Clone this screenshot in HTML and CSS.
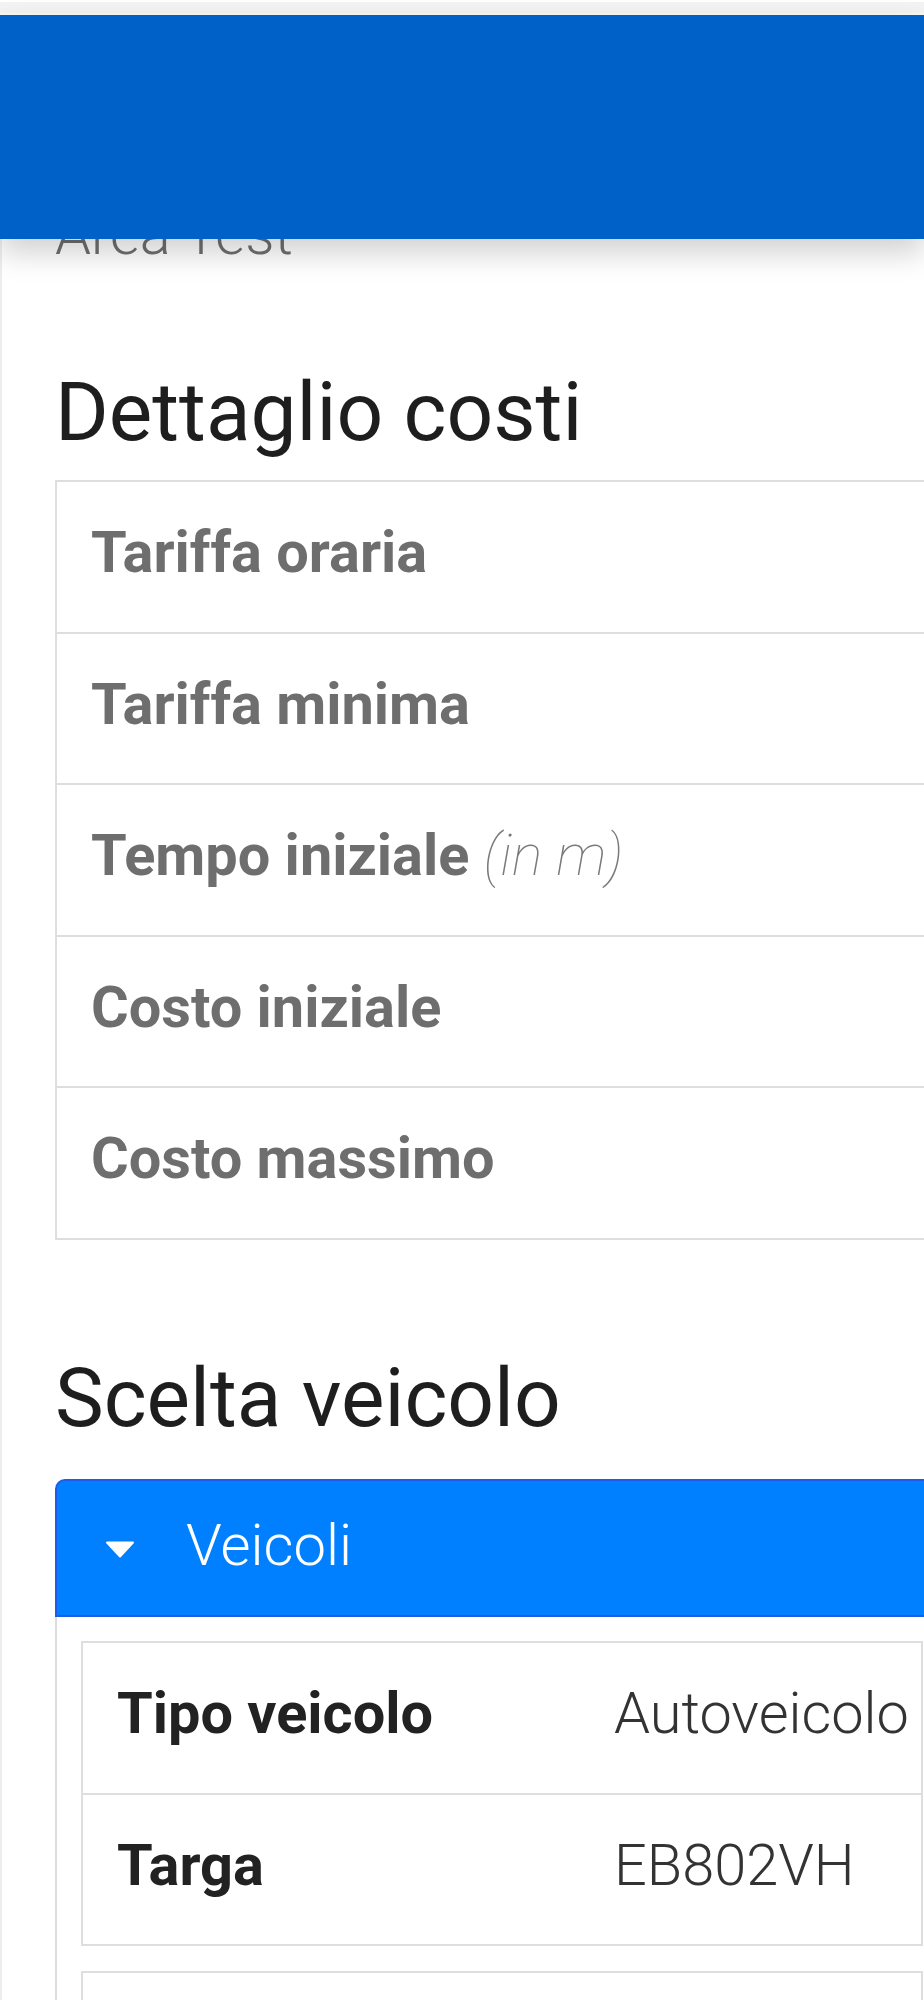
FILE: index.html
```html
<!DOCTYPE html>
<html lang="it">
<head>
<meta charset="utf-8">
<title>Dettaglio costi</title>
<link rel="stylesheet" href="styles.css">
</head>
<body>
<div class="statusbar"></div>
<header class="appbar"></header>
<main class="page">
  <p class="area-name">Area Test</p>

  <h2 class="section-title">Dettaglio costi</h2>
  <div class="cost-table">
    <div class="row"><div class="cell label">Tariffa oraria</div><div class="cell value"></div></div>
    <div class="row"><div class="cell label">Tariffa minima</div><div class="cell value"></div></div>
    <div class="row"><div class="cell label">Tempo iniziale <span class="unit">(in m)</span></div><div class="cell value"></div></div>
    <div class="row"><div class="cell label">Costo iniziale</div><div class="cell value"></div></div>
    <div class="row"><div class="cell label">Costo massimo</div><div class="cell value"></div></div>
  </div>

  <h2 class="section-title second">Scelta veicolo</h2>
  <section class="accordion">
    <div class="acc-head">
      <svg class="caret" width="30" height="17" viewBox="0 0 30 17" aria-hidden="true">
        <path d="M2 1.5 H28 L15 15.5 Z" fill="#fff" stroke="#fff" stroke-width="2" stroke-linejoin="round"/>
      </svg>
      <span class="acc-title">Veicoli</span>
    </div>
    <div class="acc-body">
      <div class="veh-table">
        <div class="row"><div class="cell vlabel">Tipo veicolo</div><div class="cell vvalue">Autoveicolo</div></div>
        <div class="row"><div class="cell vlabel">Targa</div><div class="cell vvalue">EB802VH</div></div>
      </div>
      <div class="veh-table">
        <div class="row"><div class="cell vlabel"></div><div class="cell vvalue"></div></div>
      </div>
    </div>
  </section>
</main>
</body>
</html>
```

FILE: styles.css
```css
html, body {
  margin: 0;
  padding: 0;
  overflow-x: hidden;
  background: #ffffff;
}

body {
  position: relative;
  font-family: Roboto, "Noto Sans", sans-serif;
  color: #1e1e1e;
}

.statusbar {
  height: 11px;
  background: #f3f3f3;
  border-top: 2px solid #ffffff;
  border-bottom: 2px solid #fbf8f0;
}

.appbar {
  position: absolute;
  top: 15px;
  left: 0;
  right: 0;
  height: 224px;
  background: #0062c8;
  box-shadow: 0 14px 28px rgba(0, 0, 0, 0.18);
  z-index: 2;
}

.page {
  width: 894px;
  padding: 186px 0 0 53px;
  border-left: 2px solid #ededed;
}

.area-name {
  margin: 0;
  font-size: 57.7px;
  line-height: 66px;
  font-weight: 300;
  color: #6f6f6f;
}

.section-title {
  margin: 96px 0 0;
  font-size: 82px;
  line-height: 98.4px;
  font-weight: 400;
  color: #1e1e1e;
}

.section-title.second {
  margin-top: 109px;
}

.cost-table {
  margin-top: 18.5px;
  width: 894px;
  box-sizing: border-box;
  border: 2px solid #dedede;
}

.row {
  display: grid;
  grid-template-columns: 497px 1fr;
  border-top: 2px solid #dedede;
}

.row:first-child {
  border-top: none;
}

.cell {
  padding: 36px 34px 44px;
  font-size: 57.7px;
  line-height: 69.6px;
  height: 69.6px;
  white-space: nowrap;
}

.label {
  font-weight: 700;
  color: #6e6e6e;
}

.unit {
  font-weight: 100;
  font-style: italic;
  color: #7a7a7a;
}

.accordion {
  margin-top: 32px;
  width: 894px;
}

.acc-head {
  display: flex;
  align-items: center;
  gap: 51px;
  padding: 30px 0 34.4px 48px;
  background: #0080ff;
  border: 2px solid #1b5de6;
  border-radius: 10px 10px 0 0;
}

.caret {
  display: block;
  margin-top: 6px;
  flex: none;
}

.acc-title {
  font-size: 58px;
  line-height: 69.6px;
  font-weight: 300;
  color: #ffffff;
}

.acc-body {
  display: flex;
  flex-direction: column;
  gap: 25px;
  padding: 24px 24px 0;
  border-left: 2px solid #dcdcdc;
  border-right: 2px solid #dcdcdc;
}

.veh-table {
  width: 842px;
  box-sizing: border-box;
  border: 2px solid #dedede;
}

.vlabel {
  font-weight: 700;
  color: #222222;
}

.vvalue {
  font-weight: 300;
  color: #333333;
}
```
